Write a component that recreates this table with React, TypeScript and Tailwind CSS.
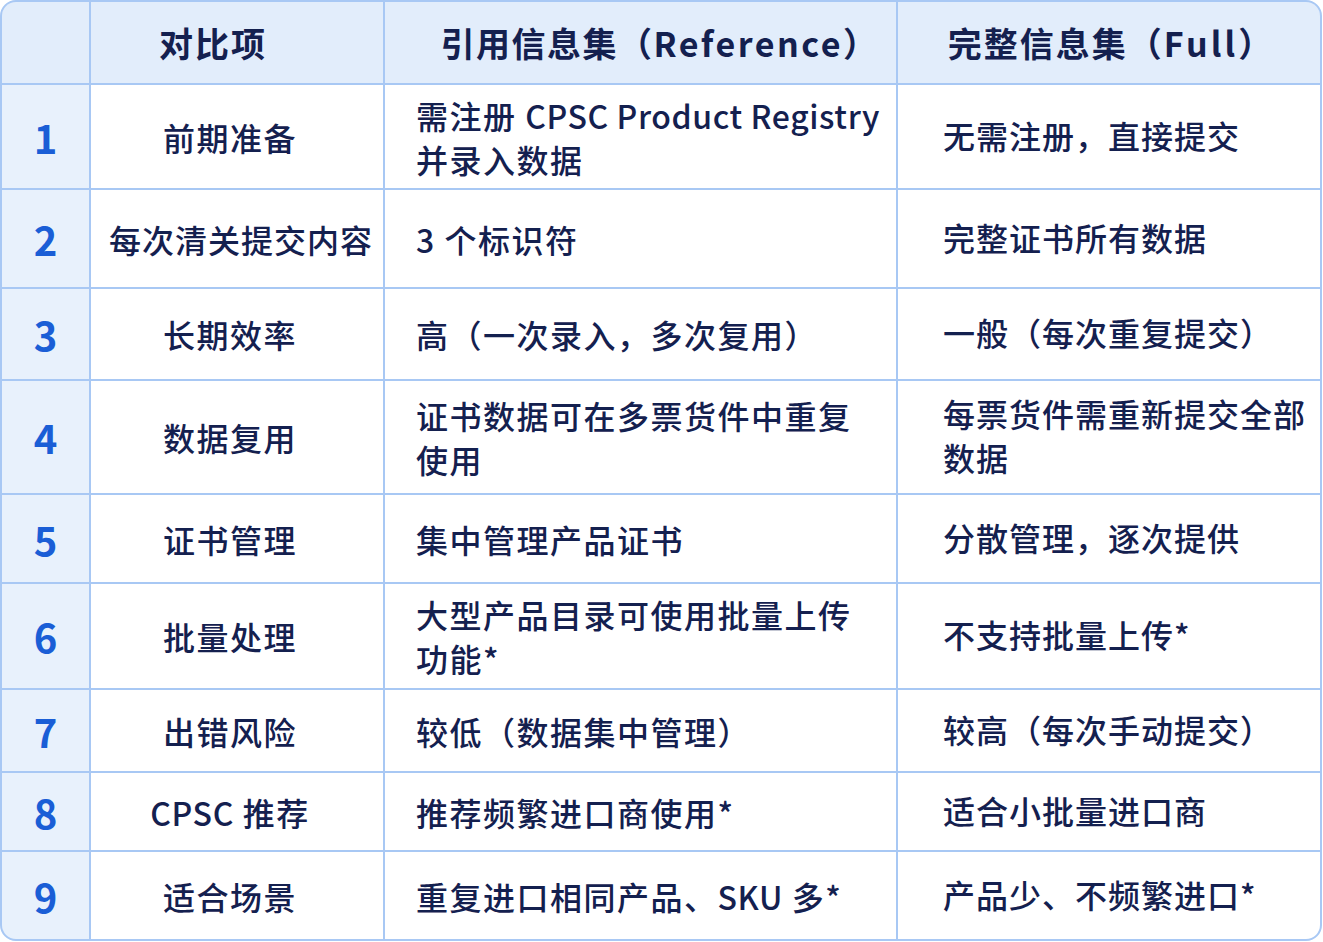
import React from "react";

type Row = { n: string; item: React.ReactNode; ref: React.ReactNode; full: React.ReactNode; h: string; itemPad?: string };

const L = ({ children }: { children: React.ReactNode }) => <span className="tracking-[0.6px]">{children}</span>;

const rows: Row[] = [
  { n: "1", item: "前期准备", ref: <>需注册 <L>CPSC Product Registry</L><br />并录入数据</>, full: "无需注册，直接提交", h: "h-[103px]" },
  { n: "2", item: "每次清关提交内容", ref: "3 个标识符", full: "完整证书所有数据", h: "h-[97px]", itemPad: "pl-[8px] tracking-[1px]" },
  { n: "3", item: "长期效率", ref: "高（一次录入，多次复用）", full: "一般（每次重复提交）", h: "h-[90px]" },
  { n: "4", item: "数据复用", ref: <>证书数据可在多票货件中重复<br />使用</>, full: <>每票货件需重新提交全部<br />数据</>, h: "h-[112px]" },
  { n: "5", item: "证书管理", ref: "集中管理产品证书", full: "分散管理，逐次提供", h: "h-[87px]" },
  { n: "6", item: "批量处理", ref: <>大型产品目录可使用批量上传<br />功能*</>, full: "不支持批量上传*", h: "h-[104px]" },
  { n: "7", item: "出错风险", ref: "较低（数据集中管理）", full: "较高（每次手动提交）", h: "h-[81px]" },
  { n: "8", item: <><L>CPSC</L> 推荐</>, ref: "推荐频繁进口商使用*", full: "适合小批量进口商", h: "h-[77px]" },
  { n: "9", item: "适合场景", ref: <>重复进口相同产品、<L>SKU</L> 多*</>, full: "产品少、不频繁进口*", h: "h-[88px]" },
];

const font = { fontFamily: '"Noto Sans CJK SC", "Noto Sans", sans-serif' };

export default function App() {
  return (
    <div className="w-[1323px] h-[942px] bg-white" style={font}>
      <div className="w-[1322px] h-[941px] rounded-[16px] border-2 border-[#a8c8f4] overflow-hidden bg-[#a8c8f4]">
        <div className="grid grid-cols-[87px_292px_511px_1fr] gap-[2px]">
          {/* header */}
          <div className="h-[81px] bg-[#e2edfb]" />
          <div className="h-[81px] bg-[#e2edfb] flex items-center justify-center text-[34px] font-bold text-[#14204f] tracking-[2px] pr-[48px]">对比项</div>
          <div className="h-[81px] bg-[#e2edfb] flex items-center justify-center text-[34px] font-bold text-[#14204f] tracking-[1.5px] pl-[38px] whitespace-nowrap">
            <span>引用信息集（<span className="tracking-[2.5px]">Reference</span>）</span>
          </div>
          <div className="h-[81px] bg-[#e2edfb] flex items-center justify-center text-[34px] font-bold text-[#14204f] tracking-[2px] pl-[4px] whitespace-nowrap">
            <span>完整信息集（<span className="tracking-[3px]">Full</span>）</span>
          </div>
          {rows.map((r) => (
            <React.Fragment key={r.n}>
              <div className={`${r.h} bg-[#e8f1fc] flex items-center justify-center text-[40px] font-bold text-[#1a5ed6]`}>{r.n}</div>
              <div className={`${r.h} bg-white flex items-center justify-center text-[32px] font-medium text-[#14204f] whitespace-nowrap ${r.itemPad ?? "pr-[14px] tracking-[1.5px]"}`}>
                <span>{r.item}</span>
              </div>
              <div className={`${r.h} bg-white flex items-center pl-[31px] text-[32px] font-medium tracking-[1.5px] leading-[44px] text-[#14204f] whitespace-nowrap`}>
                <div>{r.ref}</div>
              </div>
              <div className={`${r.h} bg-white flex items-center pl-[45px] text-[32px] font-medium tracking-[1px] leading-[44px] text-[#14204f] whitespace-nowrap`}>
                <div className="-mt-[4px]">{r.full}</div>
              </div>
            </React.Fragment>
          ))}
        </div>
      </div>
    </div>
  );
}
